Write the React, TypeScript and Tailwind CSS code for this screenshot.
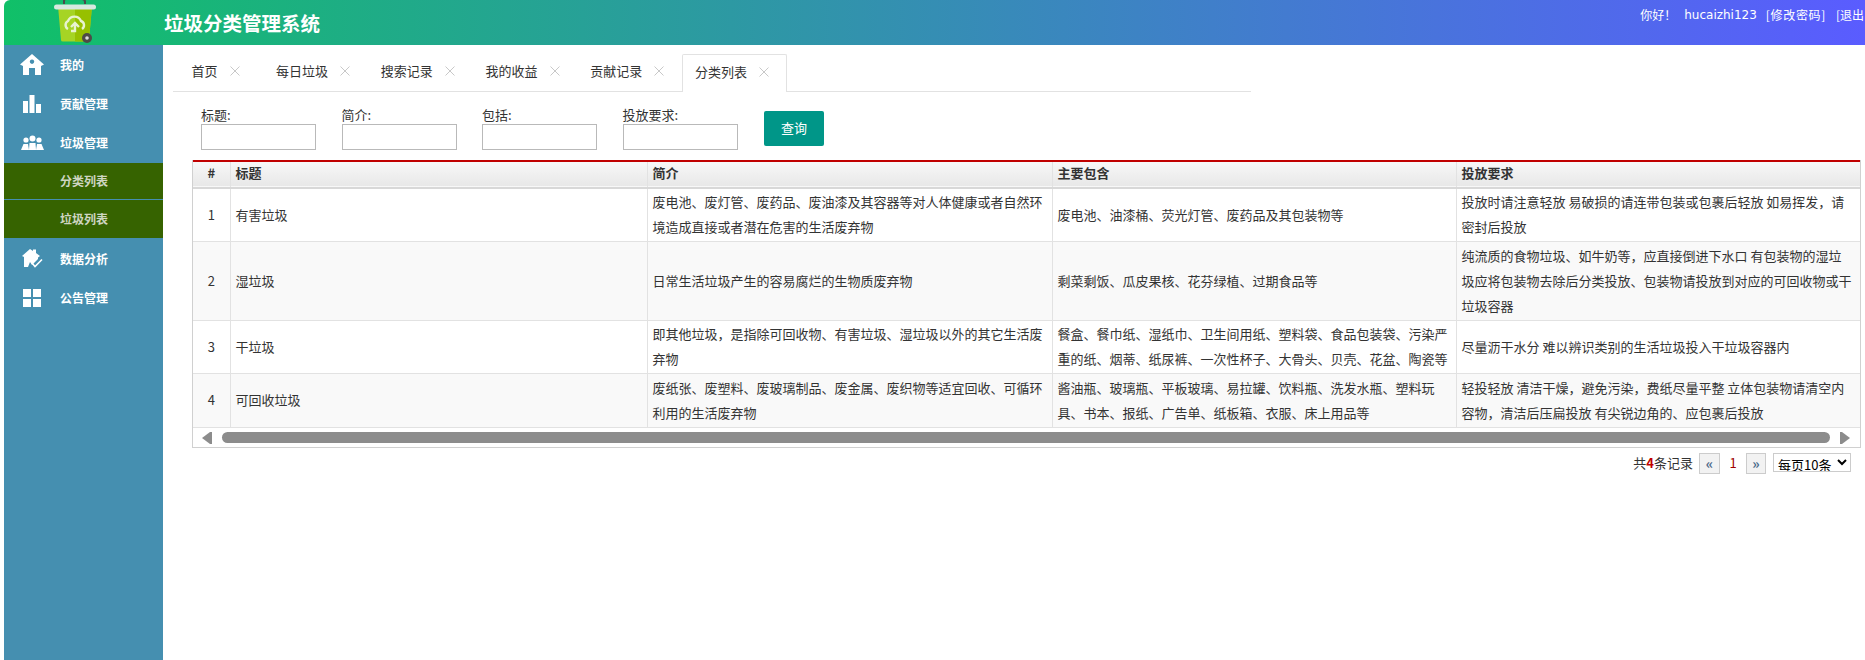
import React from "react";

const cjk = '"Noto Sans CJK SC", "Liberation Sans", sans-serif';

const HomeIcon = () => (
  <svg width="24" height="22" viewBox="0 0 24 22" fill="#fff"><path d="M12 0 L24 10.5 L21 12 L21 21 L15 21 L15 14 L9 14 L9 21 L3 21 L3 12 L0 10.5 Z M12 5.5 a2.2 2.2 0 1 0 0.01 0 Z" fillRule="evenodd" /></svg>
);
const BarsIcon = () => (
  <svg width="18" height="18" viewBox="0 0 18 18" fill="#fff"><rect x="0" y="6" width="5" height="12" /><rect x="6.5" y="0" width="5" height="18" /><rect x="13" y="9" width="5" height="9" /></svg>
);
const PeopleIcon = () => (
  <svg width="23" height="16" viewBox="0 0 23 16" fill="#fff"><circle cx="5" cy="5" r="2.6" /><circle cx="11.5" cy="3.5" r="3" /><circle cx="18" cy="5" r="2.6" /><path d="M0 15 L2.5 9 L7 9 L8 15 Z" /><path d="M8 15 L8.5 8 L14.5 8 L15 15 Z" /><path d="M15 15 L16 9 L20.5 9 L23 15 Z" /></svg>
);
const HouseCheckIcon = () => (
  <svg width="21" height="20" viewBox="0 0 21 20" fill="none"><path d="M8 0 L11 2 L11 0.5 L14 0.5 L14 4 L18 7 L16 8.5 L16 10 L10 16 L8 13 L6 18 L2 18 L2 8 L0 7 Z" fill="#fff" /><path d="M10 14 L13 17.5 L20 10.5" stroke="#fff" strokeWidth="1.6" /></svg>
);
const GridIcon = () => (
  <svg width="18" height="18" viewBox="0 0 18 18" fill="#fff"><rect width="8" height="8" /><rect x="10" width="8" height="8" /><rect y="10" width="8" height="8" /><rect x="10" y="10" width="8" height="8" /></svg>
);
const Bin = () => (
  <svg width="44" height="44" viewBox="0 0 44 44" className="block">
    <path d="M11 4 V1 Q11 -1 13 -1 H29 Q32 -1 32 2 V4" fill="none" stroke="#4b4b4b" strokeWidth="2" />
    <path d="M5 6 H39 L36 40 Q36 41.500 34 41.500 H10 Q8 41.500 8 40 Z" fill="#a6d424" />
    <path d="M22 6 H39 L36 40 Q36 41.500 34 41.500 H22 Z" fill="#97c000" />
    <rect x="1" y="4.500" width="42" height="5" rx="2.500" fill="#d7e9e0" />
    <path d="M15 29 a4.500 4.500 0 0 1 0 -8 a7 7 0 0 1 13 0 a4.500 4.500 0 0 1 1 8 M18 27 l4 -4 l4 4 M22 23 v8 h-4" fill="none" stroke="#e8f3d0" strokeWidth="2.400" />
    <circle cx="34" cy="38" r="5" fill="#4d4a46" />
    <circle cx="34" cy="38" r="1.800" fill="#ddd" />
  </svg>
);

const nav1 = [
  { t: "我的", i: <HomeIcon /> },
  { t: "贡献管理", i: <BarsIcon /> },
  { t: "垃圾管理", i: <PeopleIcon /> },
];
const nav2 = [
  { t: "数据分析", i: <HouseCheckIcon /> },
  { t: "公告管理", i: <GridIcon /> },
];

const NavRow = ({ t, i }: { t: string; i: React.ReactNode }) => (
  <div className="flex h-[39px] items-center">
    <div className="flex w-[56px] justify-center">{i}</div>
    <span className="text-[12px] font-bold text-white">{t}</span>
  </div>
);

const tabs = [
  { t: "每日垃圾" },
  { t: "搜索记录" },
  { t: "我的收益" },
  { t: "贡献记录" },
];

const X = () => (
  <svg width="10" height="10" viewBox="0 0 10 10" className="ml-[12px]"><path d="M0.500 0.500 L9.500 9.500 M9.500 0.500 L0.500 9.500" stroke="#c8c8c8" strokeWidth="1" /></svg>
);

const fields = ["标题:", "简介:", "包括:", "投放要求:"];

const rows = [
  ["1", "有害垃圾", "废电池、废灯管、废药品、废油漆及其容器等对人体健康或者自然环境造成直接或者潜在危害的生活废弃物", "废电池、油漆桶、荧光灯管、废药品及其包装物等", "投放时请注意轻放 易破损的请连带包装或包裹后轻放 如易挥发，请密封后投放"],
  ["2", "湿垃圾", "日常生活垃圾产生的容易腐烂的生物质废弃物", "剩菜剩饭、瓜皮果核、花芬绿植、过期食品等", "纯流质的食物垃圾、如牛奶等，应直接倒进下水口 有包装物的湿垃圾应将包装物去除后分类投放、包装物请投放到对应的可回收物或干垃圾容器"],
  ["3", "干垃圾", "即其他垃圾，是指除可回收物、有害垃圾、湿垃圾以外的其它生活废弃物", "餐盒、餐巾纸、湿纸巾、卫生间用纸、塑料袋、食品包装袋、污染严重的纸、烟蒂、纸尿裤、一次性杯子、大骨头、贝壳、花盆、陶瓷等", "尽量沥干水分 难以辨识类别的生活垃圾投入干垃圾容器内"],
  ["4", "可回收垃圾", "废纸张、废塑料、废玻璃制品、废金属、废织物等适宜回收、可循环利用的生活废弃物", "酱油瓶、玻璃瓶、平板玻璃、易拉罐、饮料瓶、洗发水瓶、塑料玩具、书本、报纸、广告单、纸板箱、衣服、床上用品等", "轻投轻放 清洁干燥，避免污染，费纸尽量平整 立体包装物请清空内容物，清洁后压扁投放 有尖锐边角的、应包裹后投放"],
];

export default function App() {
  return (
    <div className="flex h-[660px] w-[1865px] flex-col overflow-hidden bg-white pl-1 text-[13px] text-[#333]" style={{ fontFamily: cjk }}>
      <header className="flex h-[45px] shrink-0 overflow-hidden rounded-tl-[6px] bg-[linear-gradient(to_right,#10c068,#5a5cff)]">
        <div className="w-[160px] pl-[49px]"><Bin /></div>
        <h1 className="text-[19.500px] font-bold leading-[45px] text-white">垃圾分类管理系统</h1>
        <div className="ml-auto flex h-[29px] shrink-0 items-center gap-[8px] whitespace-nowrap text-[12px] text-white">
          <span>你好！</span>
          <span style={{ fontFamily: '"DejaVu Sans", sans-serif' }}>hucaizhi123</span>
          <span className="ml-px tracking-[0.670px]">[修改密码]</span>
          <span className="ml-[2px] flex w-[29px] whitespace-nowrap">[退出</span>
        </div>
      </header>
      <div className="flex min-h-0 flex-1">
        <aside className="w-[159px] shrink-0 bg-[#458fb0]">
          {nav1.map((n) => <NavRow key={n.t} {...n} />)}
          <div className="mt-px flex h-[37px] items-center border-b border-[#458fb0] bg-[#366300] pl-[56px] text-[12px] font-bold text-[#cfd6c2]">分类列表</div>
          <div className="flex h-[38px] items-center bg-[#366300] pl-[56px] text-[12px] font-bold text-[#cfd6c2]">垃圾列表</div>
          <div className="h-px" />
          {nav2.map((n) => <NavRow key={n.t} {...n} />)}
        </aside>
        <main className="min-w-0 flex-1">
          <div className="ml-[10px] mt-[9px] flex h-[38px] w-[1078px] items-stretch border-b border-[#e2e2e2]">
            <div className="flex w-[90px] items-center pb-[3px] pl-[18.500px]"><span>首页</span><X /></div>
            {tabs.map((t) => (
              <div key={t.t} className="flex w-[104.750px] items-center pb-[3px] pl-[13px]"><span>{t.t}</span><X /></div>
            ))}
            <div className="-mb-px flex w-[105px] items-center rounded-t-[2px] border border-b-0 border-[#e2e2e2] bg-white pb-[3px] pl-[12px]"><span>分类列表</span><X /></div>
          </div>
          <div className="ml-[38px] mt-[16px] flex items-start">
            {fields.map((f) => (
              <label key={f} className="mr-[25.500px] block w-[115px] leading-[16px]">
                <span className="block h-[16px] leading-[14px]">{f}</span>
                <input className="block h-[26px] w-[115px] border border-[#b9b9b9] bg-white" />
              </label>
            ))}
            <button className="ml-px mt-[3px] h-[35px] w-[60px] rounded-[2px] bg-[#009688] pb-[2px] text-[13px] text-white">查询</button>
          </div>
          <div className="ml-[29px] mt-[10px] w-[1669px] border border-t-0 border-[#d0d0d0]">
            <table className="w-full table-fixed border-collapse border-t-2 border-t-[#c00000] text-left leading-[25px]">
              <colgroup>
                <col className="w-[37px]" />
                <col className="w-[417px]" />
                <col className="w-[405px]" />
                <col className="w-[404px]" />
                <col />
              </colgroup>
              <thead>
                <tr className="h-[27px] border-b-2 border-[#d8d8d8] bg-gradient-to-b from-[#f8f8f8] to-[#e8e8e8] font-bold leading-[20px]">
                  <th className="border-r border-[#e2e2e2] pb-[4px] text-center">#</th>
                  <th className="border-r border-[#e2e2e2] px-[5px] pb-[4px]">标题</th>
                  <th className="border-r border-[#e2e2e2] px-[5px] pb-[4px]">简介</th>
                  <th className="border-r border-[#e2e2e2] px-[5px] pb-[4px]">主要包含</th>
                  <th className="px-[5px] pb-[4px]">投放要求</th>
                </tr>
              </thead>
              <tbody>
                {rows.map((r, idx) => (
                  <tr key={r[0]} className={`border-b border-[#e2e2e2] ${idx === 0 ? "h-[52px]" : idx === 1 ? "h-[79px]" : idx === 3 ? "h-[54px]" : "h-[53px]"} ${idx % 2 ? "bg-[#f9f9f9]" : "bg-white"}`}>
                    <td className="border-r border-[#e2e2e2] pb-[2px] text-center">{r[0]}</td>
                    <td className="border-r border-[#e2e2e2] px-[5px] pb-[2px]">{r[1]}</td>
                    <td className="border-r border-[#e2e2e2] px-[5px] pb-[2px]">{r[2]}</td>
                    <td className="border-r border-[#e2e2e2] px-[5px] pb-[2px]">{r[3]}</td>
                    <td className="pb-[2px] pl-[5px] pr-[7px]">{r[4]}</td>
                  </tr>
                ))}
              </tbody>
            </table>
            <div className="flex h-[19px] items-center pl-[9px] pr-[10px]">
              <svg width="10" height="12" viewBox="0 0 10 12" className="shrink-0"><path d="M10 0 V12 H8 L0 6 L8 0 Z" fill="#8c8c8c" /></svg>
              <div className="mx-[10px] h-[11px] flex-1 rounded-full bg-[#8c8c8c]" />
              <svg width="10" height="12" viewBox="0 0 10 12" className="shrink-0"><path d="M0 0 V12 H2 L10 6 L2 0 Z" fill="#8c8c8c" /></svg>
            </div>
          </div>
          <div className="mr-[14px] mt-[5px] flex items-start justify-end">
            <span className="leading-[20px]">共<b className="text-[#c00000]">4</b>条记录</span>
            <span className="ml-[6px] flex h-[21px] w-[21px] items-center justify-center border border-[#ccc] bg-[#f2f2f2] text-[14px] font-bold text-[#4b6a8a]">«</span>
            <span className="w-[26px] text-center leading-[20px] text-[#a00000]">1</span>
            <span className="flex h-[21px] w-[20px] items-center justify-center border border-[#ccc] bg-[#f2f2f2] text-[14px] font-bold text-[#4b6a8a]">»</span>
            <select className="ml-[7px] h-[19px] w-[78px] border border-[#ccc] bg-white text-[13px] leading-[17px] text-black">
              <option>每页10条</option>
            </select>
          </div>
        </main>
      </div>
    </div>
  );
}
